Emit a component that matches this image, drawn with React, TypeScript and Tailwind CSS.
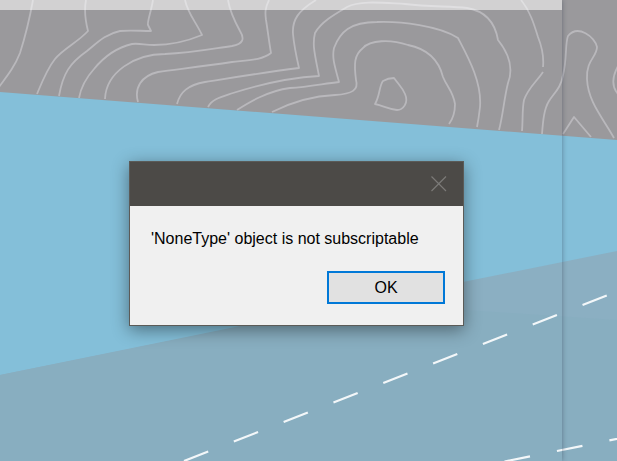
import React from 'react';

const contours = [
  'M33 0C31 11 26 34 20 53C15 66 8 75 -1 87',
  'M86 0C84 10 86 23 88 31C78 42 63 49 55 59C47 69 42 82 37 94',
  'M153 0C151 12 147 22 148 25L151 31C140 31 130 30 120 31C105 34 96 44 87 51C70 63 63 73 59 96',
  'M185 0C188 14 196 22 202 35C190 40 172 45 154 45C145 45 139 43 132 44C115 48 103 58 94 69C85 79 81 87 79 98',
  'M228 0C230 12 234 20 240 31C245 39 243 44 232 46C205 50 190 53 165 54C135 54 106 72 105 99',
  'M269 0C265 8 265 13 266 20C268 32 269 42 271 53C262 60 250 60 232 62C205 66 180 69 158 72C141 76 134 88 138 102',
  'M316 0C298 11 292 20 293 34C294 45 296 55 299 68C260 73 230 78 205 82C188 85 180 92 177 104',
  'M208 107C212 99 221 97 233 93C255 86 284 78 319 76C315 55 312 45 315 33C321 22 335 14 347 7C360 0 385 3 405 4C430 7 450 6 467 8C485 11 495 22 498 40C510 55 513 70 508 83C504 99 503 115 499 130',
  'M237 110C248 103 267 91 290 88C308 87 322 84 339 82C334 64 332 57 334 48C340 32 350 22 377 22C400 21 440 26 458 38C468 57 482 82 480 107C479 116 478 122 477 127',
  'M272 112C290 103 310 96 335 95C352 94 359 90 356 80C354 64 354 55 363 48C370 40 390 39 408 45C428 49 439 61 443 77C447 87 453 91 455 104C455 114 452 120 449 124',
  'M375 104C380 96 379 86 383 81Q388 78 394 78C399 85 402 87 405 94C409 103 403 110 397 110C388 109 384 106 375 104Z',
  'M521 0C530 11 534 24 538 37C542 47 544 57 543 67',
  'M543 72C538 80 528 88 524 100C522 110 523 120 522 131',
  'M542 134C543 121 544 109 549 101C554 93 561 88 563 75C567 60 565 43 568 36C578 24 595 37 597 47C597 57 586 60 587 79C588 102 603 118 614 138',
  'M563 134L574 117L591 137',
  'M618 66C612 77 611 86 618 94',
];

const Wallpaper: React.FC = () => (
  <svg
    className="absolute inset-0 w-full h-full"
    viewBox="0 0 617 461"
    preserveAspectRatio="xMidYMid slice"
    aria-hidden="true"
  >
    <rect width="617" height="461" fill="#9a999c" />
    <g fill="none" stroke="#b9b8bc" strokeWidth="1.8" strokeLinejoin="round">
      {contours.map((d) => (
        <path key={d} d={d} />
      ))}
    </g>
    <path d="M0 92L617 140V461H0Z" fill="#84bfd9" />
    <path d="M0 375L617 251V461H0Z" fill="#8bafc2" />
    <path d="M0 375L260 322L465 310L617 320V461H0Z" fill="#88aec0" />
    {/* Lane markings */}
    <g stroke="#f3f7f9" strokeWidth="2.2">
      <path d="M184 461L617 291.5" strokeDasharray="26 27.5" />
      <path d="M504.5 461.5L634 435.5" strokeDasharray="26 27.5" />
    </g>
  </svg>
);

const ErrorDialog: React.FC<{ message: string }> = ({ message }) => (
  <div
    role="alertdialog"
    aria-describedby="message"
    className="absolute left-[129px] top-[161px] w-[335px] border border-[#5b5b58] bg-[#f0f0f0] shadow-[0_4px_16px_rgba(0,0,0,0.42)]"
  >
    <div className="flex h-11 items-center justify-end bg-[#4c4a47] pr-4">
      <button aria-label="Close" className="flex size-4 items-center justify-center">
        <svg className="size-4" viewBox="0 0 16 16" fill="none" stroke="#7b7a78" strokeWidth="1.2">
          <path d="M.5 .5L15 15M15 .5L.5 15" />
        </svg>
      </button>
    </div>
    <div className="flex flex-col px-[18px] pt-[21px] pb-[21px]">
      <p id="message" className="px-[3px] text-base leading-6">
        {message}
      </p>
      <button className="mt-5 h-[33px] w-[118px] self-end border-2 border-[#0078d7] bg-[#e1e1e1] text-base leading-6">
        OK
      </button>
    </div>
  </div>
);

const App: React.FC = () => {
  return (
    <main className="relative min-h-screen overflow-hidden text-black font-['Liberation_Sans',Arial,sans-serif]">
      <Wallpaper />
      {/* Window behind the dialog, only its edge and lower strip show */}
      <div className="absolute inset-y-0 left-0 right-[55px] shadow-[0_0_5px_rgba(40,50,70,0.45)]">
        <div className="h-[10px] bg-white/55"></div>
      </div>
      <ErrorDialog message="'NoneType' object is not subscriptable" />
    </main>
  );
};

export default App;
